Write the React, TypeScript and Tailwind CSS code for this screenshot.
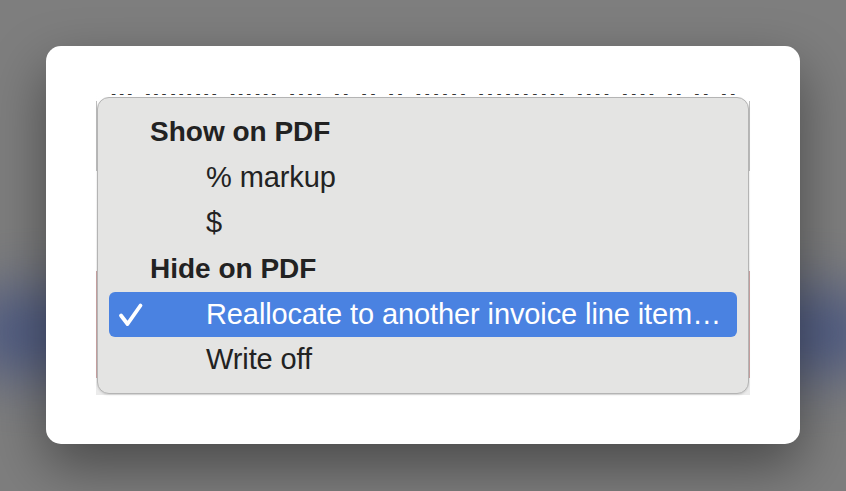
import React from "react";

const font = { fontFamily: '"Liberation Sans", Arial, sans-serif' };

function Check() {
  return (
    <svg width="26" height="26" viewBox="0 0 26 26" className="block">
      <path
        d="M3 13.5 L9.5 22 L22.5 3.5"
        fill="none"
        stroke="white"
        strokeWidth="3.8"
        strokeLinecap="round"
        strokeLinejoin="round"
      />
    </svg>
  );
}

function Header({ children }: { children: React.ReactNode }) {
  return (
    <div className="flex h-[46px] items-center pl-[52px] text-[28px] font-bold text-[#222222]">
      {children}
    </div>
  );
}

function Item({ children, checked }: { children: React.ReactNode; checked?: boolean }) {
  return (
    <div
      className={
        checked
          ? "mx-[11px] flex h-[46px] items-center rounded-[6px] bg-[#4a82e1] text-white"
          : "mx-[11px] flex h-[46px] items-center text-[#222222]"
      }
    >
      <div className="flex w-[97px] items-center pl-[9px]">{checked ? <Check /> : null}</div>
      <span className="text-[29px] tracking-[-0.1px]">{children}</span>
    </div>
  );
}

export default function App() {
  return (
    <div className="relative h-[491px] w-[846px] overflow-hidden bg-[#7e7e7e]" style={font}>
      {/* soft blue glow of the window behind the dialog */}
      <div className="absolute left-[-40px] right-[-40px] top-[290px] h-[85px] rounded-full bg-[#3c4d85] opacity-70 blur-[28px]" />
      <div className="relative pl-[46px] pt-[46px]">
        <div className="h-[398px] w-[754px] rounded-[15px] bg-white pl-[50px] pt-[48px] shadow-[0_22px_55px_rgba(0,0,0,0.42)]">
          <div className="relative flex h-[301px] w-[654px] flex-col bg-gradient-to-b from-white via-[#f6f6f6] to-[#ebebeb]">
            {/* edges of the page under the menu */}
            <div className="absolute left-0 top-[7px] h-[70px] w-px bg-[#bdbdbd]" />
            <div className="absolute left-0 top-[177px] h-[107px] w-px bg-[#c9a3a3]" />
            <div className="absolute right-0 top-[7px] h-[70px] w-px bg-[#bdbdbd]" />
            <div className="absolute right-0 top-[177px] h-[107px] w-px bg-[#c9a3a3]" />
            {/* last line of text above the menu, cut off */}
            <div className="h-[3px] overflow-hidden pl-[14px]">
              <div className="mt-[-21px] whitespace-nowrap text-[26px] font-bold leading-[26px] tracking-[2px] text-[#333333]">
                m mmm mm nn n  n n nnn nnnnn nn nn n n n
              </div>
            </div>
            <div className="relative mx-px flex h-[297px] flex-col rounded-[12px] border border-[#b4b4b4] bg-[#e4e4e3] pb-[10px] pt-[11px] shadow-[0_1px_2px_rgba(0,0,0,0.12)]">
              <Header>Show on PDF</Header>
              <Item>% markup</Item>
              <Item>$</Item>
              <Header>Hide on PDF</Header>
              <Item checked>Reallocate to another invoice line item…</Item>
              <Item>Write off</Item>
            </div>
          </div>
        </div>
      </div>
    </div>
  );
}
